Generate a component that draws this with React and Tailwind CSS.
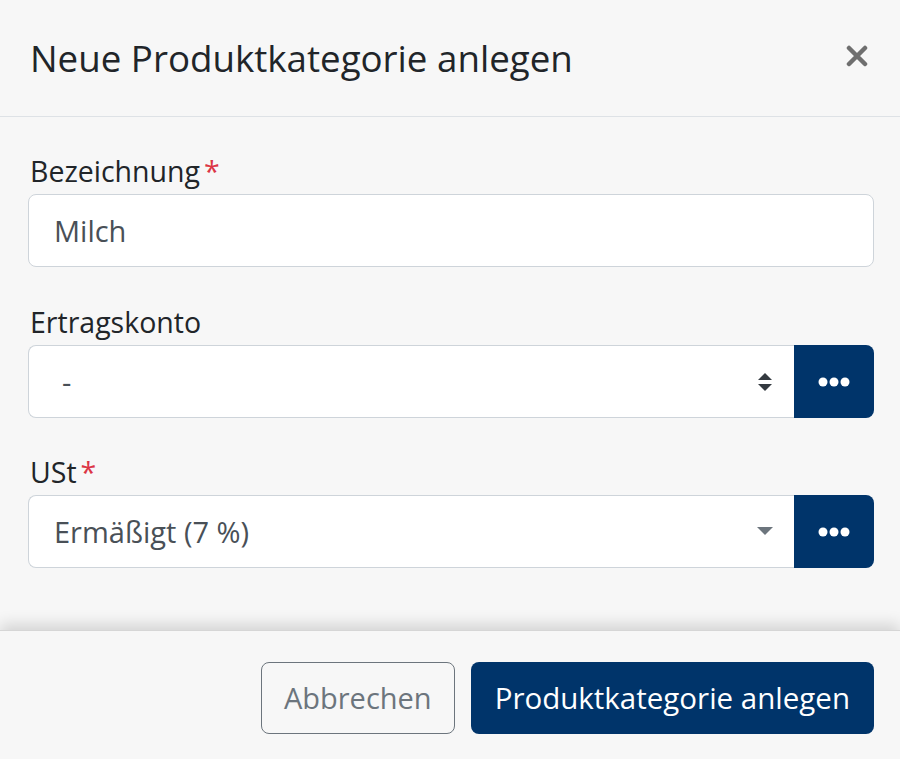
import React from 'react';

const font = { fontFamily: '"Open Sans", "Noto Sans", sans-serif' };

function Dots() {
  return (
    <svg width="32" height="10" viewBox="0 0 32 10">
      <circle cx="5" cy="5" r="4.5" fill="white" />
      <circle cx="16" cy="5" r="4.5" fill="white" />
      <circle cx="27" cy="5" r="4.5" fill="white" />
    </svg>
  );
}

function UpDown() {
  return (
    <svg width="16" height="20" viewBox="0 0 16 20">
      <path d="M8 1 L15 8 L1 8 Z" fill="#343a40" />
      <path d="M1 12 L15 12 L8 19 Z" fill="#343a40" />
    </svg>
  );
}

function Caret() {
  return (
    <svg width="16" height="9" viewBox="0 0 16 9">
      <path d="M0 0 L16 0 L8 8 Z" fill="#6c757d" />
    </svg>
  );
}

function Label({ children, required }) {
  return (
    <div className="text-[28.5px] leading-[44px] text-[#212529] mb-[1px] pl-[2px]">
      {children}
      {required && <span className="text-[#dc3545] ml-[4px]">*</span>}
    </div>
  );
}

function PickButton() {
  return (
    <button className="w-[80px] h-full bg-[#00346a] rounded-r-[8px] flex items-center justify-center">
      <Dots />
    </button>
  );
}

export default function App() {
  return (
    <div style={font} className="w-[900px] h-[759px] bg-[#f7f7f7] flex flex-col overflow-hidden">
      {/* Header */}
      <div className="h-[117px] shrink-0 border-b border-[#dee2e6] flex items-center justify-between pl-[30px] pr-[32px]">
        <h5 className="text-[36.7px] leading-none text-[#212529]">Neue Produktkategorie anlegen</h5>
        <svg width="22" height="22" viewBox="0 0 22 22" className="mb-[4px]">
          <path d="M3 3 L19 19 M19 3 L3 19" stroke="#6f6f6f" strokeWidth="4.5" strokeLinecap="round" />
        </svg>
      </div>

      {/* Body */}
      <div className="flex-1 pl-[28px] pr-[26px] pt-[32px]">
        <Label required>Bezeichnung</Label>
        <div className="h-[73px] mb-[33px] bg-white border border-[#ced4da] rounded-[8px] flex items-center pl-[25px] text-[29px] text-[#495057]">
          Milch
        </div>

        <Label>Ertragskonto</Label>
        <div className="h-[73px] flex mb-[32px]">
          <div className="flex-1 bg-white border border-[#ced4da] border-r-0 rounded-l-[8px] flex items-center justify-between pl-[33px] pr-[21px] text-[29px] text-[#495057]">
            <span>-</span>
            <UpDown />
          </div>
          <PickButton />
        </div>

        <Label required>USt</Label>
        <div className="h-[73px] flex">
          <div className="flex-1 bg-white border border-[#ced4da] border-r-0 rounded-l-[8px] flex items-center justify-between pl-[25px] pr-[21px] text-[29px] text-[#495057]">
            <span>Ermäßigt (7 %)</span>
            <Caret />
          </div>
          <PickButton />
        </div>
      </div>

      {/* Footer */}
      <div className="h-[129px] shrink-0 border-t border-[#d6d6d6] shadow-[0_-6px_14px_rgba(0,0,0,0.14)] flex items-start justify-end gap-[16px] pr-[26px] pt-[31px]">
        <button className="h-[72px] px-[22px] border border-[#6c757d] rounded-[8px] text-[29px] text-[#6c757d]">
          Abbrechen
        </button>
        <button className="h-[72px] px-[24px] bg-[#00346a] rounded-[8px] text-[29.5px] text-white">
          Produktkategorie anlegen
        </button>
      </div>
    </div>
  );
}
